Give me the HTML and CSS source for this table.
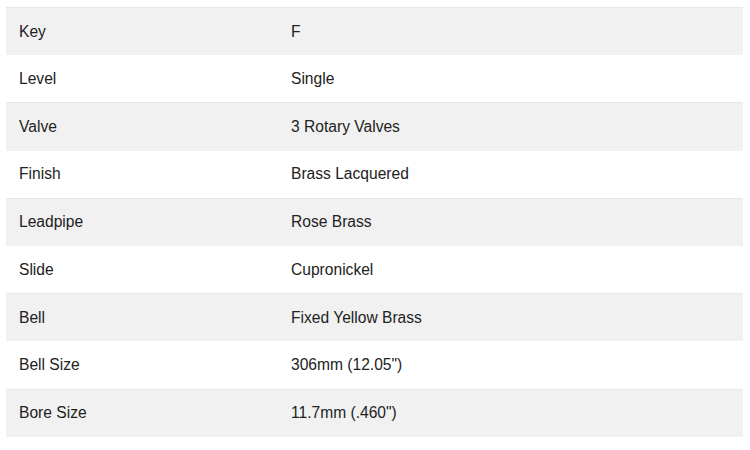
FILE: index.html
```html
<!DOCTYPE html>
<html>
<head>
<meta charset="utf-8">
<link rel="stylesheet" href="styles.css">
</head>
<body>
<table class="specs">
  <tr><td class="k">Key</td><td class="v">F</td></tr>
  <tr><td class="k">Level</td><td class="v">Single</td></tr>
  <tr><td class="k">Valve</td><td class="v">3 Rotary Valves</td></tr>
  <tr><td class="k">Finish</td><td class="v">Brass Lacquered</td></tr>
  <tr><td class="k">Leadpipe</td><td class="v">Rose Brass</td></tr>
  <tr><td class="k">Slide</td><td class="v">Cupronickel</td></tr>
  <tr><td class="k">Bell</td><td class="v">Fixed Yellow Brass</td></tr>
  <tr><td class="k">Bell Size</td><td class="v">306mm (12.05")</td></tr>
  <tr><td class="k">Bore Size</td><td class="v">11.7mm (.460")</td></tr>
</table>
</body>
</html>
```
FILE: styles.css
```css
html, body {
  margin: 0;
  padding: 0;
  background: #fff;
}
body {
  padding: 7px 7px 0 6px;
  font-family: "Liberation Sans", Arial, sans-serif;
  font-size: 15.6px;
  color: #222;
}
.specs {
  width: 737px;
  border-collapse: collapse;
  table-layout: fixed;
}
.specs tr {
  height: 47.7px;
}
.specs tr:nth-child(odd) td {
  background: #f1f1f1;
  border-top: 1px solid #e8e8e8;
}
.specs td {
  padding: 0 13px;
  vertical-align: middle;
}
.specs td.k {
  width: 246px;
}
```
